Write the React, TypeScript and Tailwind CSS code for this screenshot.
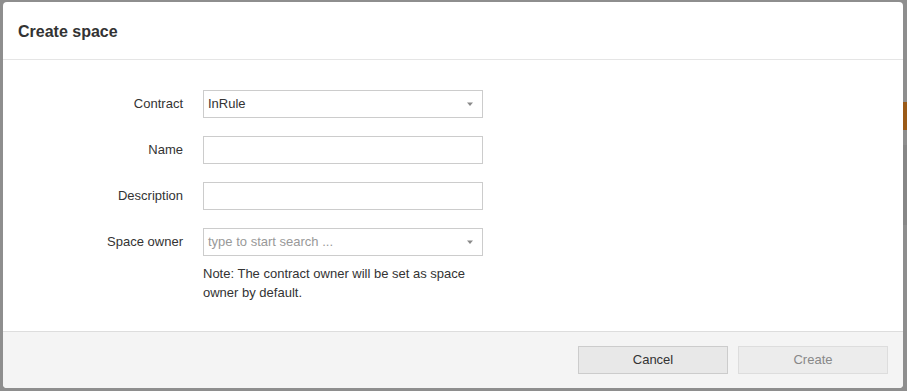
import React from 'react';

const Caret = () => (
  <svg width="8" height="6" viewBox="0 0 8 6" className="shrink-0">
    <path d="M1 1.5h6L4 5z" fill="#8a8a8a" />
  </svg>
);

const Row: React.FC<{ label: string; children: React.ReactNode }> = ({ label, children }) => (
  <div className="flex items-start">
    <div className="w-[180px] text-right text-[13px] leading-[28px] text-[#333]">{label}</div>
    <div className="ml-[20px] w-[280px]">{children}</div>
  </div>
);

export default function App() {
  return (
    <div
      className="relative h-[391px] w-[907px] overflow-hidden bg-[#8e8e8e]"
      style={{ fontFamily: '"Liberation Sans", Arial, sans-serif' }}
    >
      {/* page behind the overlay */}
      <div className="absolute right-0 top-[102px] h-[28px] w-[6px] bg-[#9a5a17]" />
      <div className="absolute right-0 top-[145px] h-[80px] w-[6px] bg-[#878787]" />

      <div className="absolute left-[3px] top-[2px] flex h-[386px] w-[900px] flex-col overflow-hidden rounded-[4px] bg-white">
        <div className="flex h-[58px] items-center border-b border-[#e5e5e5] px-[15px] pt-[3px]">
          <h1 className="text-[16px] font-bold text-[#333]">Create space</h1>
        </div>

        <div className="flex flex-1 flex-col gap-[18px] pt-[30px]">
          <Row label="Contract">
            <div className="flex h-[28px] items-center justify-between border border-[#ccc] bg-white pl-[4px] pr-[8px] text-[13px] text-[#333]">
              <span>InRule</span>
              <Caret />
            </div>
          </Row>
          <Row label="Name">
            <div className="h-[28px] border border-[#ccc] bg-white" />
          </Row>
          <Row label="Description">
            <div className="h-[28px] border border-[#ccc] bg-white" />
          </Row>
          <Row label="Space owner">
            <div className="flex h-[28px] items-center justify-between border border-[#ccc] bg-white pl-[4px] pr-[8px] text-[13px] text-[#999]">
              <span>type to start search ...</span>
              <Caret />
            </div>
            <p className="mt-[8px] text-[13px] leading-[19px] text-[#333]">
              Note: The contract owner will be set as space owner by default.
            </p>
          </Row>
        </div>

        <div className="flex h-[57px] items-center justify-end gap-[10px] border-t border-[#ddd] bg-[#f4f4f4] pr-[15px]">
          <button className="h-[28px] w-[150px] border border-[#ccc] bg-[#e8e8e8] text-[13px] text-[#333]">
            Cancel
          </button>
          <button className="h-[28px] w-[150px] border border-[#ddd] bg-[#ececec] text-[13px] text-[#888]">
            Create
          </button>
        </div>
      </div>
    </div>
  );
}
